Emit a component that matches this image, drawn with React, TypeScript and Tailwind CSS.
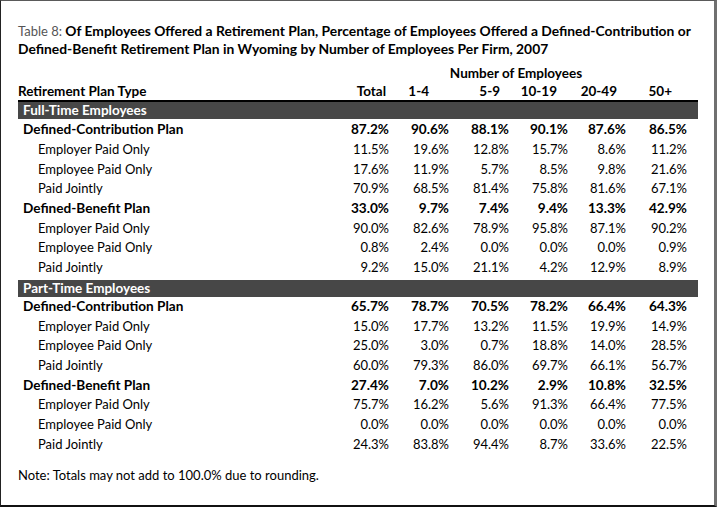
const cols = ["Total", "1-4", "5-9", "10-19", "20-49", "50+"];
// header labels sit a little left of the value column edge
const headPad = ["pr-[3px]", "pr-[20px]", "pr-[9px]", "pr-[11px]", "pr-[9px]", "pr-[15px]"];

type Row = { label: string; values: string[]; bold?: boolean };

const fullTime: Row[] = [
  { label: "Defined-Contribution Plan", values: ["87.2%", "90.6%", "88.1%", "90.1%", "87.6%", "86.5%"], bold: true },
  { label: "Employer Paid Only", values: ["11.5%", "19.6%", "12.8%", "15.7%", "8.6%", "11.2%"] },
  { label: "Employee Paid Only", values: ["17.6%", "11.9%", "5.7%", "8.5%", "9.8%", "21.6%"] },
  { label: "Paid Jointly", values: ["70.9%", "68.5%", "81.4%", "75.8%", "81.6%", "67.1%"] },
  { label: "Defined-Benefit Plan", values: ["33.0%", "9.7%", "7.4%", "9.4%", "13.3%", "42.9%"], bold: true },
  { label: "Employer Paid Only", values: ["90.0%", "82.6%", "78.9%", "95.8%", "87.1%", "90.2%"] },
  { label: "Employee Paid Only", values: ["0.8%", "2.4%", "0.0%", "0.0%", "0.0%", "0.9%"] },
  { label: "Paid Jointly", values: ["9.2%", "15.0%", "21.1%", "4.2%", "12.9%", "8.9%"] },
];

const partTime: Row[] = [
  { label: "Defined-Contribution Plan", values: ["65.7%", "78.7%", "70.5%", "78.2%", "66.4%", "64.3%"], bold: true },
  { label: "Employer Paid Only", values: ["15.0%", "17.7%", "13.2%", "11.5%", "19.9%", "14.9%"] },
  { label: "Employee Paid Only", values: ["25.0%", "3.0%", "0.7%", "18.8%", "14.0%", "28.5%"] },
  { label: "Paid Jointly", values: ["60.0%", "79.3%", "86.0%", "69.7%", "66.1%", "56.7%"] },
  { label: "Defined-Benefit Plan", values: ["27.4%", "7.0%", "10.2%", "2.9%", "10.8%", "32.5%"], bold: true },
  { label: "Employer Paid Only", values: ["75.7%", "16.2%", "5.6%", "91.3%", "66.4%", "77.5%"] },
  { label: "Employee Paid Only", values: ["0.0%", "0.0%", "0.0%", "0.0%", "0.0%", "0.0%"] },
  { label: "Paid Jointly", values: ["24.3%", "83.8%", "94.4%", "8.7%", "33.6%", "22.5%"] },
];

const grid = "grid grid-cols-[312px_59px_60px_60px_59px_58px_61px]";

function DataRow({ row }: { row: Row }) {
  return (
    <div className={`${grid} h-[19.7px] items-center ${row.bold ? "text-[13.6px] font-bold" : ""}`}>
      <div className={row.bold ? "pl-[5px]" : "pl-[20px]"}>{row.label}</div>
      {row.values.map((v, i) => (
        <div key={i} className="text-right">
          {v}
        </div>
      ))}
    </div>
  );
}

function Section({ title, rows, first }: { title: string; rows: Row[]; first?: boolean }) {
  return (
    <div className={first ? "" : "mt-[2px]"}>
      <div className="flex h-[17px] items-center bg-[#474747] pl-[5px] text-[13.5px] font-bold text-white">{title}</div>
      <div className={first ? "pt-[1px]" : ""}>
        {rows.map((r, i) => (
          <DataRow key={i} row={r} />
        ))}
      </div>
    </div>
  );
}

export default function App() {
  return (
    <div
      className="h-[507px] w-[717px] border-t border-r-[3px] border-b-2 border-l border-t-[#5a5a5a] border-r-[#707070] border-b-[#111] border-l-[#222] bg-white pr-[16px] pl-[17px] text-[13px] leading-[17px] text-black"
      style={{ fontFamily: "Lato, 'Open Sans', sans-serif" }}
    >
      <div className="pt-[21px] text-[13.85px] font-bold">
        <span className="text-[13px] font-normal text-[#555]">Table 8: </span>
        Of Employees Offered a Retirement Plan, Percentage of Employees Offered a Defined-Contribution or
        <br />
        Defined-Benefit Retirement Plan in Wyoming by Number of Employees Per Firm, 2007
      </div>

      <div className="mt-[8px] text-[13.5px] font-bold">
        <div className={grid}>
          <div />
          <div className="col-span-6 pl-[15px] text-center">Number of Employees</div>
        </div>
        <div className={`${grid} border-b-2 border-black pt-[1px]`}>
          <div>Retirement Plan Type</div>
          {cols.map((c, i) => (
            <div key={c} className={`text-right ${headPad[i]}`}>
              {c}
            </div>
          ))}
        </div>
      </div>

      <Section title="Full-Time Employees" rows={fullTime} first />
      <Section title="Part-Time Employees" rows={partTime} />

      <div className="mt-[13px]">Note: Totals may not add to 100.0% due to rounding.</div>
    </div>
  );
}
